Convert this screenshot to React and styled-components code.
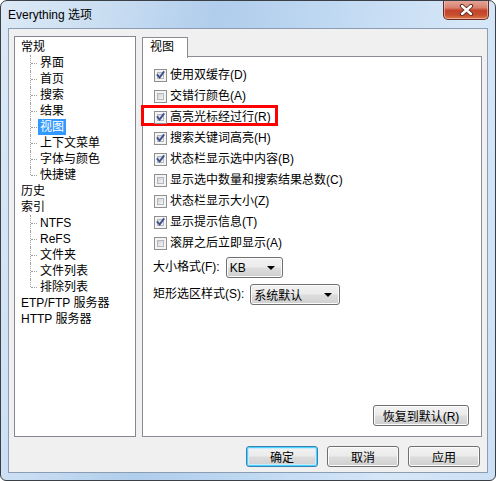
import React from "react";
import styled, { createGlobalStyle, css } from "styled-components";

const Global = createGlobalStyle`
  html, body { margin: 0; padding: 0; background: #fff; }
  body {
    font-family: "Liberation Sans", "Noto Sans CJK SC", sans-serif;
    font-size: 12px;
    color: #000;
  }
  * { box-sizing: border-box; }
`;

const Window = styled.div`
  width: 496px;
  height: 481px;
  border: 1px solid #3b4047;
  border-radius: 7px 7px 6px 6px;
  background: linear-gradient(100deg, #dce9f6 0%, #cadef2 18%, #b0cdec 38%, #c0d9f2 58%, #d6e7f8 82%, #cce0f5 100%);
  display: flex;
  flex-direction: column;
  overflow: hidden;
`;

const TitleBar = styled.div`
  height: 27px;
  display: flex;
  justify-content: space-between;
  align-items: flex-start;
  padding-left: 7px;
`;

const Title = styled.div`
  line-height: 28px;
  font-size: 12px;
  color: #000;
`;

const CloseButton = styled.div`
  width: 46px;
  height: 20px;
  margin: -1px 6px 0 0;
  border: 1px solid #6b2b20;
  border-top: none;
  border-radius: 0 0 5px 5px;
  background: linear-gradient(#e6aa9c 0%, #d9826f 40%, #c3432c 55%, #c8502f 80%, #dd7d4f 100%);
  box-shadow: inset 0 0 0 1px rgba(255, 220, 210, 0.5);
  display: flex;
  align-items: center;
  justify-content: center;
`;

const Client = styled.div`
  flex: 1;
  margin: 0 7px 7px;
  background: #f0f0f0;
  border: 1px solid #8a9db3;
  padding: 7px 5px 5px;
  display: flex;
  flex-direction: column;
`;

const Main = styled.div`
  flex: 1;
  display: flex;
  gap: 6px;
`;

const Tree = styled.div`
  width: 122px;
  background: #fff;
  border: 1px solid #828790;
  padding: 2px 0 0 4px;
`;

const Node = styled.div`
  height: 16px;
  position: relative;
`;

const Label = styled.span`
  display: inline-block;
  height: 16px;
  line-height: 16px;
  padding: 0 2px;
  white-space: nowrap;
  ${(p) =>
    p.$selected &&
    css`
      background: #3399ff;
      color: #fff;
    `}
`;

const Children = styled.div`
  padding-left: 19px;
`;

const Child = styled(Node)`
  &::before {
    content: "";
    position: absolute;
    left: -8px;
    top: 0;
    height: ${(p) => (p.$last ? "8px" : "16px")};
    border-left: 1px dotted #a0a0a0;
  }
  &::after {
    content: "";
    position: absolute;
    left: -7px;
    top: 8px;
    width: 6px;
    border-top: 1px dotted #a0a0a0;
  }
`;

const TabArea = styled.div`
  flex: 1;
  display: flex;
  flex-direction: column;
`;

const TabStrip = styled.div`
  height: 20px;
  display: flex;
`;

const Tab = styled.div`
  position: relative;
  z-index: 1;
  margin-top: 1px;
  width: 46px;
  height: 21px;
  padding-left: 7px;
  line-height: 19px;
  background: #fff;
  border: 1px solid #898c95;
  border-bottom: none;
`;

const Panel = styled.div`
  flex: 1;
  background: #fff;
  border: 1px solid #898c95;
  padding: 8px 0 10px 11px;
  display: flex;
  flex-direction: column;
`;

const CheckRow = styled.div`
  position: relative;
  height: 21px;
  display: flex;
  align-items: center;
  gap: 3px;
  white-space: nowrap;
`;

const RowText = styled.span`
  line-height: 16px;
  padding-bottom: 2px;
`;

const Box = styled.span`
  position: relative;
  width: 13px;
  height: 13px;
  flex: none;
  border: 1px solid #8e8f8f;
  background: #f4f4f4;
  &::before {
    content: "";
    position: absolute;
    inset: 2px;
    border: 1px solid #b4b8bd;
    background: linear-gradient(135deg, #cdd1d6 0%, #e6e8eb 60%, #f6f6f6 100%);
  }
  svg {
    position: absolute;
    left: 0;
    top: 0;
    z-index: 1;
  }
`;

const Marker = styled.span`
  position: absolute;
  left: -13px;
  top: -2px;
  width: 137px;
  height: 21px;
  border: 3px solid #ff0000;
`;

const SelectRow = styled.div`
  height: 27px;
  display: flex;
  align-items: center;
  gap: 6px;
  margin-left: -1px;
  white-space: nowrap;
`;

const Select = styled.div`
  width: ${(p) => p.$width}px;
  height: 21px;
  border: 1px solid #707070;
  border-radius: 3px;
  background: linear-gradient(#f2f2f2 0%, #ebebeb 48%, #dddddd 52%, #cfcfcf 100%);
  box-shadow: inset 0 0 0 1px #fbfbfb;
  display: flex;
  align-items: center;
  justify-content: space-between;
  padding: 0 7px 0 3px;
`;

const Arrow = styled.span`
  width: 0;
  height: 0;
  border-left: 4px solid transparent;
  border-right: 4px solid transparent;
  border-top: 4px solid #000;
`;

const PanelFooter = styled.div`
  margin-top: auto;
  display: flex;
  justify-content: flex-end;
  padding-right: 12px;
`;

const Button = styled.button`
  width: ${(p) => p.$width}px;
  height: 21px;
  padding: 0 0 1px;
  font-family: "Liberation Sans", "Noto Sans CJK SC", sans-serif;
  font-size: 12px;
  color: #000;
  border: 1px solid #707070;
  border-radius: 3px;
  background: linear-gradient(#f2f2f2 0%, #ebebeb 48%, #dddddd 52%, #cfcfcf 100%);
  box-shadow: inset 0 0 0 1px #fcfcfc;
  ${(p) =>
    p.$primary &&
    css`
      border-color: #3c7fb1;
      box-shadow: inset 0 0 0 1px #48d4fe, inset 0 0 0 2px #c9ecfc;
    `}
`;

const ButtonRow = styled.div`
  margin-top: 9px;
  display: flex;
  justify-content: flex-end;
  gap: 9px;
  padding-right: 2px;
`;

function Checkbox({ checked }) {
  return (
    <Box>
      {checked && (
        <svg width="11" height="11" viewBox="0 0 11 11">
          <path d="M2.5 5.2 L4.6 7.6 L8.6 2.2" fill="none" stroke="#3e4f8c" strokeWidth="1.9" strokeLinecap="square" />
        </svg>
      )}
    </Box>
  );
}

const general = ["界面", "首页", "搜索", "结果", "视图", "上下文菜单", "字体与颜色", "快捷键"];
const index = ["NTFS", "ReFS", "文件夹", "文件列表", "排除列表"];

const options = [
  { text: "使用双缓存(D)", checked: true },
  { text: "交错行颜色(A)", checked: false },
  { text: "高亮光标经过行(R)", checked: true, marked: true },
  { text: "搜索关键词高亮(H)", checked: true },
  { text: "状态栏显示选中内容(B)", checked: true },
  { text: "显示选中数量和搜索结果总数(C)", checked: false },
  { text: "状态栏显示大小(Z)", checked: false },
  { text: "显示提示信息(T)", checked: true },
  { text: "滚屏之后立即显示(A)", checked: false },
];

export default function App() {
  return (
    <>
      <Global />
      <Window>
        <TitleBar>
          <Title>Everything 选项</Title>
          <CloseButton>
            <svg width="15" height="12" viewBox="0 0 15 12">
              <path d="M3 2 L12 10 M12 2 L3 10" stroke="#5a2418" strokeWidth="4.2" strokeLinecap="round" />
              <path d="M3 2 L12 10 M12 2 L3 10" stroke="#fff" strokeWidth="2.4" strokeLinecap="round" />
            </svg>
          </CloseButton>
        </TitleBar>
        <Client>
          <Main>
            <Tree>
              <Node><Label>常规</Label></Node>
              <Children>
                {general.map((t, i) => (
                  <Child key={t} $last={i === general.length - 1}>
                    <Label $selected={t === "视图"}>{t}</Label>
                  </Child>
                ))}
              </Children>
              <Node><Label>历史</Label></Node>
              <Node><Label>索引</Label></Node>
              <Children>
                {index.map((t, i) => (
                  <Child key={t} $last={i === index.length - 1}>
                    <Label>{t}</Label>
                  </Child>
                ))}
              </Children>
              <Node><Label>ETP/FTP 服务器</Label></Node>
              <Node><Label>HTTP 服务器</Label></Node>
            </Tree>
            <TabArea>
              <TabStrip>
                <Tab>视图</Tab>
              </TabStrip>
              <Panel>
                {options.map((o) => (
                  <CheckRow key={o.text}>
                    {o.marked && <Marker />}
                    <Checkbox checked={o.checked} />
                    <RowText>{o.text}</RowText>
                  </CheckRow>
                ))}
                <SelectRow>
                  <RowText>大小格式(F):</RowText>
                  <Select $width={57}>
                    <span>KB</span>
                    <Arrow />
                  </Select>
                </SelectRow>
                <SelectRow>
                  <RowText>矩形选区样式(S):</RowText>
                  <Select $width={90}>
                    <span>系统默认</span>
                    <Arrow />
                  </Select>
                </SelectRow>
                <PanelFooter>
                  <Button $width={96}>恢复到默认(R)</Button>
                </PanelFooter>
              </Panel>
            </TabArea>
          </Main>
          <ButtonRow>
            <Button $width={72} $primary>确定</Button>
            <Button $width={72}>取消</Button>
            <Button $width={72}>应用</Button>
          </ButtonRow>
        </Client>
      </Window>
    </>
  );
}
